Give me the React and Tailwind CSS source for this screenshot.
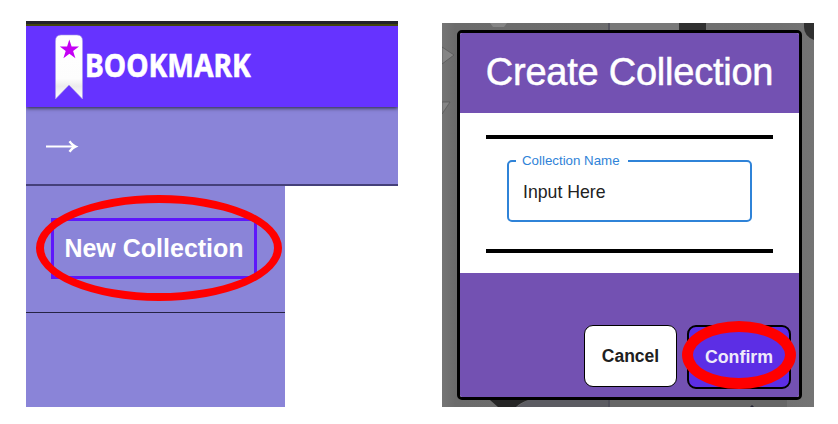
function BookmarkLogo() {
  return (
    <div className="flex h-full items-start pt-[7px] pl-[28px]">
      <svg width="31" height="70" viewBox="0 0 31 70" className="block shrink-0">
        <defs>
          <linearGradient id="ribbon" x1="0" y1="0" x2="0" y2="1">
            <stop offset="0" stopColor="#ffffff" />
            <stop offset="0.68" stopColor="#fdfdfd" />
            <stop offset="0.8" stopColor="#ececec" />
            <stop offset="1" stopColor="#ffffff" />
          </linearGradient>
        </defs>
        <path d="M1.500 66V8Q1.500 2 7 2H23Q28.500 2 28.500 8V66L15 52Z" fill="url(#ribbon)" stroke="#a99bea" strokeWidth="0.600" />
        <path d="M15.300 6.500l2.300 7h7.400l-5.900 4.400 2.300 7.300-6-4.500-6 4.500 2.300-7.300-5.900-4.400h7.300z" fill="#c400f5" />
      </svg>
      <span className="mt-[16px] origin-left scale-x-[0.883] font-['Noto_Sans','Open_Sans',sans-serif] text-[32px] leading-[32px] font-bold text-white [-webkit-text-stroke:0.600px_white]">
        BOOKMARK
      </span>
    </div>
  );
}

function SidebarView() {
  return (
    <section className="relative flex h-[386px] w-[372px] shrink-0 flex-col font-['Liberation_Sans',Arial,sans-serif]">
      <div className="h-[3px] shrink-0 bg-[#23232b]" />
      <header className="relative z-10 h-[83px] shrink-0 border-t-2 border-[#43460f] bg-[#6633ff] shadow-[0_1px_4px_rgba(0,0,0,0.75)] [clip-path:inset(0_0_-12px_0)]">
        <BookmarkLogo />
      </header>
      <div className="flex h-[79px] shrink-0 items-center border-b-2 border-[#45407a] bg-[#8a84d8] pl-[20px]">
        <svg width="34" height="16" viewBox="0 0 34 16" className="mt-[2px]">
          <path d="M0 7.500H29" stroke="#fff" strokeWidth="2" />
          <path d="M22.500 3L24.500 1.500Q27 5.500 32.500 7.500Q27 9.500 24.500 13.500L22.500 12L26.500 7.500Z" fill="#fff" />
        </svg>
      </div>
      <aside className="flex w-[259px] flex-1 flex-col bg-[#8a84d8]">
        <div className="h-[127px] border-b-[1.500px] border-[#252344] pt-[32px] pl-[25px]">
          <button className="block h-[61px] w-[206px] border-[3px] border-[#5e17fb] text-[25px] leading-[53px] font-bold whitespace-nowrap text-white">
            New Collection
          </button>
        </div>
      </aside>
      <div className="absolute top-[174px] left-[10px] z-20 h-[106px] w-[246px] rounded-[50%] border-8 border-[#ff0000]" />
    </section>
  );
}

function Backdrop() {
  return (
    <svg width="372" height="384" viewBox="0 0 372 384" className="absolute inset-0">
      <defs>
        <linearGradient id="shade" x1="0" y1="0" x2="1" y2="0">
          <stop offset="0" stopColor="#757575" />
          <stop offset="0.035" stopColor="#6b6b6b" />
          <stop offset="0.900" stopColor="#707070" />
          <stop offset="1" stopColor="#747474" />
        </linearGradient>
      </defs>
      <path d="M0 0H372V384H0Z" fill="url(#shade)" />
      <path d="M167 0H237V8H167Z" fill="#787878" />
      <path d="M167 0V8" stroke="#55555e" strokeWidth="2" />
      <path d="M48 0H65L62 4H51Z" fill="#858585" />
      <path d="M0 24L12 32L0 41Z" fill="#858585" stroke="#555" strokeWidth="0.700" />
      <path d="M0 79H8L0 91Z" fill="#858585" stroke="#555" strokeWidth="0.700" />
      <path d="M237 0H264V8H237Z" fill="#303030" />
      <path d="M362 0H372V17Q362 13 362 4Z" fill="#303030" />
      <path d="M86 377H167V384H74Z" fill="#5c5c62" />
      <path d="M167 377H345V384H167Z" fill="#666666" />
      <path d="M48 377H86Q78 380 74 384H56Z" fill="#252525" />
      <path d="M167 377V384" stroke="#50505a" strokeWidth="2" />
      <path d="M310 382L312 384H308Z" fill="#252535" />
    </svg>
  );
}

function DialogView() {
  return (
    <section className="relative h-[384px] w-[372px] shrink-0 overflow-hidden pt-[7px] pl-[15px] font-['Liberation_Sans',Arial,sans-serif]">
      <Backdrop />
      <div className="relative flex h-[370px] w-[345px] flex-col overflow-hidden rounded-[5px] border-[3px] border-black bg-white">
        <h1 className="h-[80px] shrink-0 bg-[#7351b2] text-center text-[38px] leading-[78px] tracking-[-0.240px] whitespace-nowrap text-white [-webkit-text-stroke:0.500px_white]">
          Create Collection
        </h1>
        <div className="flex h-[160px] shrink-0 flex-col px-[26px] pt-[22px] pb-[20px]">
          <div className="flex flex-1 flex-col border-y-[4px] border-black px-[21px] pt-[13px]">
            <fieldset className="h-[70px] rounded-[5px] border-2 border-[#2f83d8] pl-[7px]">
              <legend className="w-[112px] pl-[6px] text-[13.300px] leading-[18px] whitespace-nowrap text-[#2f83d8]">
                Collection Name
              </legend>
              <div className="mt-[11px] pl-[7px] text-[17.700px] leading-[22px] text-[#222]">Input Here</div>
            </fieldset>
          </div>
        </div>
        <footer className="flex flex-1 items-start justify-end gap-[10px] bg-[#7351b2] pt-[52px] pr-[8px]">
          <button className="h-[62px] w-[93px] rounded-[9px] border-[1.500px] border-black bg-white text-[17.500px] font-bold text-[#202020]">
            Cancel
          </button>
          <button className="h-[64px] w-[104px] rounded-[9px] border-2 border-black bg-[#5c2ee5] text-[17.800px] font-bold text-[#eeeafa]">
            Confirm
          </button>
        </footer>
      </div>
      <div className="absolute top-[298px] left-[240px] h-[68px] w-[114px] rounded-[50%] border-[11px] border-[#ff0000]" />
    </section>
  );
}

export default function App() {
  return (
    <main className="flex h-[424px] w-[838px] items-start gap-[44px] overflow-hidden bg-white pt-[21px] pl-[26px]">
      <SidebarView />
      <div className="pt-[2px]">
        <DialogView />
      </div>
    </main>
  );
}
